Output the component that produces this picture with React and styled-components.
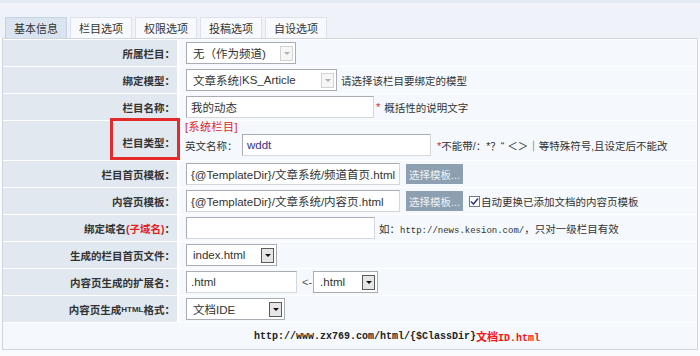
import React from 'react'
import styled, { createGlobalStyle } from 'styled-components'

const GlobalStyle = createGlobalStyle`
  html, body { margin: 0; padding: 0; background: #fafbfd; }
  body { font-family: "Liberation Sans", "Noto Sans CJK SC", sans-serif; color: #333; }
`

const tabs = ['基本信息', '栏目选项', '权限选项', '投稿选项', '自设选项']

function App() {
  return (
    <>
      <GlobalStyle />
      <Page>
        <TopBar>
          {tabs.map((t, i) => (
            <Tab key={t} $active={i === 0}>{t}</Tab>
          ))}
        </TopBar>

        <Panel>
          <Label>所属栏目：</Label>
          <Value>
            <Select $w={110}>无（作为频道)<Arrow $off /></Select>
          </Value>

          <Label>绑定模型：</Label>
          <Value>
            <Select $w={151}>文章系统<Pipe>|</Pipe>KS_Article<Arrow $off /></Select>
            <Note>请选择该栏目要绑定的模型</Note>
          </Value>

          <Label>栏目名称：</Label>
          <Value>
            <Input $w={188}>我的动态</Input>
            <Star>*</Star>
            <Note>概括性的说明文字</Note>
          </Value>

          <Label $tall>
            栏目类型：
            <Marker />
          </Label>
          <TypeCell>
            <System>[系统栏目]</System>
            <Line>
              <span>英文名称：</span>
              <Input $w={189} $blue>wddt</Input>
              <Note><Star>*</Star>{'不能带/：*？“ ＜＞｜等特殊符号,且设定后不能改'}</Note>
            </Line>
          </TypeCell>

          <Label>栏目首页模板：</Label>
          <Value>
            <Input $w={214}>{'{@TemplateDir}/文章系统/频道首页.html'}</Input>
            <Button>选择模板...</Button>
          </Value>

          <Label>内容页模板：</Label>
          <Value>
            <Input $w={214}>{'{@TemplateDir}/文章系统/内容页.html'}</Input>
            <Button>选择模板...</Button>
            <Check>
              <svg width="9" height="9" viewBox="0 0 9 9">
                <path d="M1 4.5 L3.5 7 L8 1.5" fill="none" stroke="#2a3f8c" strokeWidth="1.6" />
              </svg>
            </Check>
            <CheckText>自动更换已添加文档的内容页模板</CheckText>
          </Value>

          <Label>绑定域名<Red>(子域名)</Red>：</Label>
          <Value>
            <Input $w={189} />
            <Note $gap={4}>如：<Mono>http://news.kesion.com/</Mono>，只对一级栏目有效</Note>
          </Value>

          <Label>生成的栏目首页文件：</Label>
          <Value>
            <Select $w={91}>index.html<Arrow /></Select>
          </Value>

          <Label>内容页生成的扩展名：</Label>
          <Value>
            <Input $w={111}>.html</Input>
            <Arrowish>&lt;-</Arrowish>
            <Select $w={65}>.html<Arrow /></Select>
          </Value>

          <Label>内容页生成<Small>HTML</Small>格式：</Label>
          <Value>
            <Select $w={99}>文档IDE<Arrow /></Select>
          </Value>

          <Footer>
            <Mono $size={10}>http://www.zx769.com/html/{'{$ClassDir}'}</Mono>
            <Red $plain>文档<Mono $size={10}>ID.html</Mono></Red>
          </Footer>
        </Panel>
      </Page>
    </>
  )
}

export default App

const Page = styled.div`
  width: 700px;
  height: 356px;
  overflow: hidden;
  font-size: 11px;
`

const TopBar = styled.div`
  height: 38px;
  box-sizing: border-box;
  background: linear-gradient(#e3eaf4 0, #e3eaf4 3px, #eff3f9 3px);
  display: flex;
  align-items: flex-end;
  gap: 3px;
  padding-left: 5px;
`

const Tab = styled.div`
  width: 62px;
  height: 21px;
  box-sizing: border-box;
  display: flex;
  align-items: center;
  justify-content: center;
  font-size: 11px;
  color: #333;
  border: 1px solid ${p => (p.$active ? '#c5d2e1' : '#dbe2eb')};
  border-bottom: none;
  background: ${p => (p.$active ? '#dae4f0' : '#f7f9fc')};
`

const Panel = styled.div`
  margin: 0 2px;
  border: 1px solid #cfd6df;
  background: #fff;
  padding: 1px 0 0 0;
  display: grid;
  grid-template-columns: 174px 1fr;
  column-gap: 3px;
  row-gap: 1px;
`

const Label = styled.div`
  position: relative;
  height: ${p => (p.$tall ? 39 : 26)}px;
  box-sizing: border-box;
  padding-top: ${p => (p.$tall ? 4 : 0)}px;
  background: #e1e8f0;
  display: flex;
  align-items: center;
  justify-content: flex-end;
  padding-right: 2px;
  font-size: 10.5px;
  font-weight: bold;
  color: #333;
  white-space: nowrap;
`

const Marker = styled.div`
  position: absolute;
  left: 107px;
  top: -3px;
  width: 64px;
  height: 36px;
  border: 3px solid #e52a2c;
`

const Value = styled.div`
  background: #f5f8fc;
  display: flex;
  align-items: center;
  padding-left: 6px;
  white-space: nowrap;
`

const TypeCell = styled.div`
  background: #f5f8fc;
  display: flex;
  flex-direction: column;
  justify-content: flex-start;
  padding-left: 5px;
  font-size: 10.5px;
  white-space: nowrap;
`

const System = styled.div`
  color: #e01f1f;
  font-size: 11px;
  letter-spacing: 0.5px;
  line-height: 13px;
`

const Line = styled.div`
  display: flex;
  align-items: center;

  & > span:first-child {
    width: 57px;
  }
`

const Select = styled.div`
  width: ${p => p.$w}px;
  height: 22px;
  box-sizing: border-box;
  border: 1px solid #a9adb3;
  background: #fff;
  display: flex;
  align-items: center;
  justify-content: space-between;
  padding: 0 2px 0 6px;
  font-size: 11.5px;
  color: #333;
`

const Pipe = styled.span`
  color: #6b3fa8;
`

const Arrow = styled.span`
  margin-left: auto;
  width: 13px;
  height: 15px;
  box-sizing: border-box;
  border: 1px solid ${p => (p.$off ? '#d2d2d2' : '#5a5a5a')};
  background: ${p => (p.$off ? '#f6f6f6' : '#e6e6e6')};
  display: flex;
  align-items: center;
  justify-content: center;

  &::after {
    content: '';
    border-left: 3px solid transparent;
    border-right: 3px solid transparent;
    border-top: 3px solid ${p => (p.$off ? '#b0b0b0' : '#111')};
  }
`

const Input = styled.div`
  width: ${p => p.$w}px;
  height: 22px;
  box-sizing: border-box;
  border: 1px solid #a9adb3;
  border-right-color: #d4d7db;
  border-bottom-color: #d4d7db;
  background: #fff;
  display: flex;
  align-items: center;
  padding-left: 4px;
  font-size: 11.5px;
  color: ${p => (p.$blue ? '#3a2f86' : '#333')};
  overflow: hidden;
`

const Note = styled.span`
  margin-left: ${p => p.$gap || 4}px;
  font-size: 10.5px;
  color: #333;
`

const Star = styled.span`
  color: #e01f1f;
  margin-left: 2px;
  font-size: 11px;
`

const Red = styled.span`
  color: ${p => (p.$plain ? '#ff1010' : '#e01f1f')};
  font-weight: bold;
`

const Mono = styled.span`
  font-family: "Liberation Mono", monospace;
  font-size: ${p => p.$size || 9}px;
`

const Small = styled.span`
  font-size: 8px;
  font-family: "Liberation Sans", sans-serif;
  font-weight: bold;
`

const Button = styled.div`
  margin-left: 6px;
  width: 57px;
  height: 20px;
  background: #8da0b2;
  color: #eef2f6;
  font-size: 10.5px;
  display: flex;
  align-items: center;
  justify-content: center;
`

const Check = styled.span`
  margin-left: 6px;
  width: 11px;
  height: 11px;
  box-sizing: border-box;
  border: 1px solid #6d7a8a;
  background: #fff;
  display: flex;
  align-items: center;
  justify-content: center;
`

const CheckText = styled.span`
  margin-left: 1px;
  font-size: 10.5px;
  color: #333;
`

const Arrowish = styled.span`
  margin: 0 1px 0 5px;
  color: #555;
  font-size: 11px;
`

const Footer = styled.div`
  grid-column: 1 / -1;
  height: 26px;
  background: #f5f8fc;
  display: flex;
  align-items: center;
  padding-left: 251px;
  font-weight: bold;
  color: #222;
`
